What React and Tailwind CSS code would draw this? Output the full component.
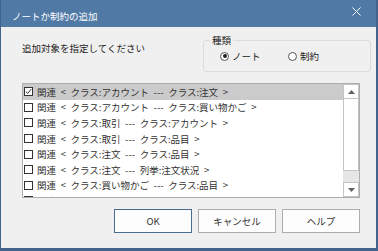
import React from "react";

const rows = [
  "関連 < クラス:アカウント --- クラス:注文 >",
  "関連 < クラス:アカウント --- クラス:買い物かご >",
  "関連 < クラス:取引 --- クラス:アカウント >",
  "関連 < クラス:取引 --- クラス:品目 >",
  "関連 < クラス:注文 --- クラス:品目 >",
  "関連 < クラス:注文 --- 列挙:注文状況 >",
  "関連 < クラス:買い物かご --- クラス:品目 >",
  "関連 < クラス:品目 --- クラス:在庫 >",
];

const font = { fontFamily: '"Noto Sans CJK JP", "Noto Sans", sans-serif' };

function Checkbox({ checked }) {
  return (
    <span className="w-[9px] h-[9px] border border-[#333] bg-white flex items-center justify-center shrink-0">
      {checked && (
        <svg width="7" height="7" viewBox="0 0 7 7">
          <path d="M0.8 3.6 L2.7 5.4 L6.2 1.2" fill="none" stroke="#333" strokeWidth="1" />
        </svg>
      )}
    </span>
  );
}

function Radio({ checked }) {
  return (
    <span className="w-[9px] h-[9px] rounded-full border border-[#555] bg-white flex items-center justify-center shrink-0">
      {checked && <span className="w-[4px] h-[4px] rounded-full bg-[#222]" />}
    </span>
  );
}

export default function App() {
  return (
    <div
      className="w-[378px] h-[251px] flex flex-col bg-[#f0f0f0] border-l border-r-2 border-b-[3px] border-[#42638a] text-[#222] overflow-hidden"
      style={font}
    >
      <div className="h-[27px] shrink-0 bg-[#5079a6] flex items-center justify-between pl-[11px] pr-[15px]">
        <span className="text-[9.5px] leading-[12px] text-white mt-[5px]">ノートか制約の追加</span>
        <svg width="9" height="9" viewBox="0 0 9 9" className="mb-[5px]">
          <path d="M0.5 0.5 L8.5 8.5 M8.5 0.5 L0.5 8.5" stroke="#ffffff" strokeWidth="1" />
        </svg>
      </div>

      <div className="flex items-start pl-[21px] pr-[5px] pt-[7px]">
        <div className="flex-1 mt-[8px] text-[9.5px] leading-[12px]">追加対象を指定してください</div>
        <fieldset className="w-[168px] h-[38px] border border-[#dcdcdc] rounded-[3px]">
          <legend className="ml-[6px] px-[2px] text-[9.5px] leading-[12px]">種類</legend>
          <div className="flex items-center pl-[16px] mt-[4px] text-[9.5px] leading-[12px]">
            <Radio checked />
            <span className="ml-[3px] w-[56px]">ノート</span>
            <Radio />
            <span className="ml-[3px]">制約</span>
          </div>
        </fieldset>
      </div>

      <div className="mt-[11px] ml-[21px] mr-[16px] h-[115px] border border-[#adadad] bg-white flex">
        <div className="flex-1 overflow-hidden">
          {rows.map((r, i) => (
            <div
              key={i}
              className={`h-[15.6px] flex items-center pl-[1px] text-[9.5px] leading-[12px] whitespace-nowrap ${i === 0 ? "bg-[#cbcbcb]" : ""}`}
            >
              <Checkbox checked={i === 0} />
              <span className="ml-[4px] text-[#333] [word-spacing:2.5px]">{r}</span>
            </div>
          ))}
        </div>
        <div className="w-[16px] flex flex-col bg-[#e6e6e6]">
          <div className="h-[15px] border border-[#c4c4c4] bg-white flex items-center justify-center">
            <svg width="7" height="4" viewBox="0 0 7 4">
              <path d="M0 4 L3.5 0 L7 4 Z" fill="#606060" />
            </svg>
          </div>
          <div className="h-[72px] border-x border-b border-[#c4c4c4] bg-white" />
          <div className="flex-1" />
          <div className="h-[15px] border border-[#c4c4c4] bg-white flex items-center justify-center">
            <svg width="7" height="4" viewBox="0 0 7 4">
              <path d="M0 0 L3.5 4 L7 0 Z" fill="#606060" />
            </svg>
          </div>
        </div>
      </div>

      <div className="mt-[11px] flex justify-end gap-[6px] pr-[16px] text-[9.5px] leading-[12px] text-[#333]">
        <button className="w-[78px] h-[24px] bg-[#fdfdfd] border border-[#4a6a90] flex items-center justify-center">OK</button>
        <button className="w-[78px] h-[24px] bg-[#fdfdfd] border border-[#adadad] flex items-center justify-center">キャンセル</button>
        <button className="w-[78px] h-[24px] bg-[#fdfdfd] border border-[#adadad] flex items-center justify-center">ヘルプ</button>
      </div>
    </div>
  );
}
